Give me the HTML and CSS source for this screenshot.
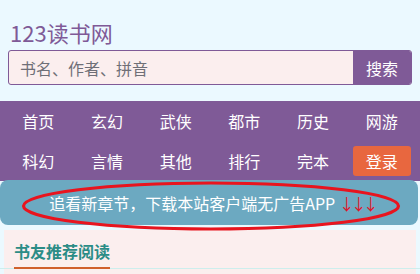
FILE: index.html
```html
<!DOCTYPE html>
<html lang="zh">
<head>
<meta charset="utf-8">
<link rel="stylesheet" href="styles.css">
</head>
<body>
<header class="header">
  <div class="logo">123读书网</div>
  <form class="search">
    <input class="search-input" type="text" placeholder="书名、作者、拼音">
    <button class="search-btn" type="button">搜索</button>
  </form>
</header>
<nav class="nav">
  <a class="nav-item">首页</a>
  <a class="nav-item">玄幻</a>
  <a class="nav-item">武侠</a>
  <a class="nav-item">都市</a>
  <a class="nav-item">历史</a>
  <a class="nav-item">网游</a>
  <a class="nav-item">科幻</a>
  <a class="nav-item">言情</a>
  <a class="nav-item">其他</a>
  <a class="nav-item">排行</a>
  <a class="nav-item">完本</a>
  <a class="nav-item login">登录</a>
</nav>
<div class="app-bar">
  <span class="app-text">追看新章节，下载本站客户端无广告APP <span class="arrows">↓↓↓</span></span>
  <svg class="ring" width="384" height="52" viewBox="0 0 384 52"><ellipse cx="192" cy="26" rx="187.5" ry="23" fill="none" stroke="#e8141e" stroke-width="3.2"/></svg>
</div>
<section class="box">
  <div class="box-head"><h2 class="box-title">书友推荐阅读</h2></div>
</section>
</body>
</html>
```
FILE: styles.css
```css
html, body {
  margin: 0;
  padding: 0;
}
body {
  background: #ebf9ff;
  font-family: "Noto Sans CJK SC", "Noto Sans", sans-serif;
  width: 420px;
  height: 274px;
  overflow: hidden;
}
.header {
  padding: 17px 8px 0 8px;
}
.logo {
  font-size: 22px;
  line-height: 30px;
  color: #7f5a97;
  padding-left: 2px;
}
.search {
  display: flex;
  margin: 3px 0 0 0;
  width: 404px;
  height: 35px;
  box-sizing: border-box;
  border: 1px solid #7f5a97;
  border-radius: 3px;
  background: #fbeeee;
  overflow: hidden;
}
.search-input {
  flex: 1;
  border: 0;
  background: transparent;
  padding: 0 0 0 11px;
  font-family: inherit;
  font-size: 16px;
  color: #555;
  outline: none;
}
.search-input::placeholder {
  color: #6f6f77;
}
.search-btn {
  width: 58px;
  border: 0;
  background: #7f5a97;
  color: #fff;
  font-family: inherit;
  font-size: 16px;
  padding: 0;
}
.nav {
  margin-top: 16px;
  background: #7f5a97;
  padding: 0 4px;
  display: grid;
  grid-template-columns: repeat(6, 1fr);
  grid-auto-rows: 40px;
}
.nav-item {
  display: flex;
  align-items: center;
  justify-content: center;
  color: #fff;
  font-size: 16px;
}
.nav-item.login {
  background: #e8673f;
  border-radius: 3px;
  width: 58px;
  height: 30px;
  margin: 5px auto;
}
.app-bar {
  position: relative;
  width: 418px;
  height: 45px;
  margin-top: -1px;
  background: #6ca9c1;
  border-radius: 8px;
  display: flex;
  align-items: center;
  justify-content: center;
}
.app-text {
  color: #fff;
  font-size: 16px;
  margin-left: 6px;
}
.arrows {
  color: #e0142a;
  letter-spacing: -4px;
}
.ring {
  position: absolute;
  left: 19px;
  top: 0;
}
.box {
  margin: 5px 4px 0 4px;
  background: #fbeeee;
  padding: 0 10px;
  height: 44px;
}
.box-head {
  border-bottom: 1px solid #cdeeed;
  margin: 0 -14px;
  padding: 0 14px;
}
.box-title {
  display: inline-block;
  margin: 0 0 -1px 0;
  padding: 9px 0 3px 0;
  font-size: 16px;
  font-weight: bold;
  line-height: 25px;
  color: #2b8c86;
  border-bottom: 2px solid #d0602c;
}
```
